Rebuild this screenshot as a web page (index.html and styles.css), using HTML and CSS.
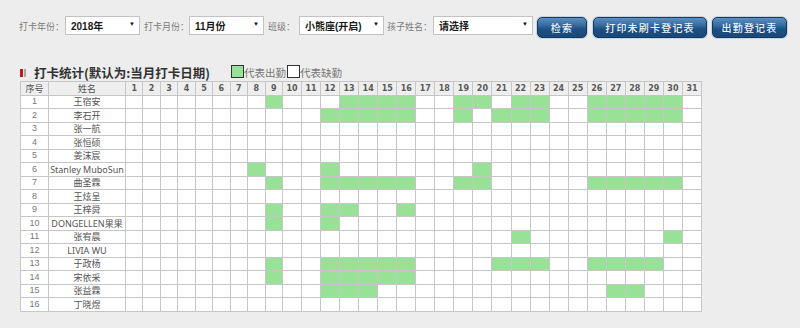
FILE: index.html
```html
<!DOCTYPE html>
<html lang="zh-CN">
<head>
<meta charset="utf-8">
<title>打卡统计</title>
<link rel="stylesheet" href="styles.css">
</head>
<body>
<div class="page">
  <div class="toolbar">
    <span class="lbl lbl-1">打卡年份：</span>
    <div class="sel sel-1"><span>2018年</span><span class="arrow">▼</span></div>
    <span class="lbl lbl-2">打卡月份：</span>
    <div class="sel sel-2"><span>11月份</span><span class="arrow">▼</span></div>
    <span class="lbl lbl-3">班级：</span>
    <div class="sel sel-3"><span>小熊座(开启)</span><span class="arrow">▼</span></div>
    <span class="lbl lbl-4">孩子姓名：</span>
    <div class="sel sel-4"><span>请选择</span><span class="arrow">▼</span></div>
    <button class="btn btn-1">检索</button>
    <button class="btn btn-2">打印未刷卡登记表</button>
    <button class="btn btn-3">出勤登记表</button>
  </div>

  <div class="title-row">
    <span class="mark-red"></span><span class="mark-gray"></span>
    <span class="title">打卡统计(默认为:当月打卡日期)</span>
    <span class="legend-box legend-on"></span><span class="legend-txt">代表出勤</span>
    <span class="legend-box legend-off"></span><span class="legend-txt">代表缺勤</span>
  </div>

  <table class="grid">
    <colgroup>
      <col class="c-no"><col class="c-name">
      <col class="c-s"><col class="c-s"><col class="c-s"><col class="c-s"><col class="c-s"><col class="c-s"><col class="c-s"><col class="c-s"><col class="c-s">
      <col class="c-d"><col class="c-d"><col class="c-d"><col class="c-d"><col class="c-d"><col class="c-d"><col class="c-d"><col class="c-d"><col class="c-d"><col class="c-d"><col class="c-d">
      <col class="c-d"><col class="c-d"><col class="c-d"><col class="c-d"><col class="c-d"><col class="c-d"><col class="c-d"><col class="c-d"><col class="c-d"><col class="c-d"><col class="c-d">
    </colgroup>
    <thead>
      <tr>
        <th class="h-txt">序号</th><th class="h-txt">姓名</th>
        <th>1</th><th>2</th><th>3</th><th>4</th><th>5</th><th>6</th><th>7</th><th>8</th><th>9</th><th>10</th>
        <th>11</th><th>12</th><th>13</th><th>14</th><th>15</th><th>16</th><th>17</th><th>18</th><th>19</th><th>20</th>
        <th>21</th><th>22</th><th>23</th><th>24</th><th>25</th><th>26</th><th>27</th><th>28</th><th>29</th><th>30</th><th>31</th>
      </tr>
    </thead>
    <tbody>
      <tr><td class="no">1</td><td class="nm">王宿安</td>
        <td></td><td></td><td></td><td></td><td></td><td></td><td></td><td></td>
        <td class="g"></td><td></td><td></td><td></td>
        <td class="g"></td><td class="g"></td><td class="g"></td><td class="g"></td>
        <td></td><td></td><td class="g"></td><td class="g"></td><td></td><td class="g"></td><td class="g"></td><td></td><td></td>
        <td class="g"></td><td class="g"></td><td class="g"></td><td class="g"></td><td class="g"></td><td></td></tr>
      <tr><td class="no">2</td><td class="nm">李石开</td>
        <td></td><td></td><td></td><td></td><td></td><td></td><td></td><td></td><td></td><td></td><td></td>
        <td class="g"></td><td class="g"></td><td class="g"></td><td class="g"></td><td class="g"></td>
        <td></td><td></td><td class="g"></td><td></td><td class="g"></td><td class="g"></td><td class="g"></td><td></td><td></td>
        <td class="g"></td><td class="g"></td><td class="g"></td><td class="g"></td><td class="g"></td><td></td></tr>
      <tr><td class="no">3</td><td class="nm">张一航</td>
        <td></td><td></td><td></td><td></td><td></td><td></td><td></td><td></td><td></td><td></td>
        <td></td><td></td><td></td><td></td><td></td><td></td><td></td><td></td><td></td><td></td>
        <td></td><td></td><td></td><td></td><td></td><td></td><td></td><td></td><td></td><td></td><td></td></tr>
      <tr><td class="no">4</td><td class="nm">张恒硕</td>
        <td></td><td></td><td></td><td></td><td></td><td></td><td></td><td></td><td></td><td></td>
        <td></td><td></td><td></td><td></td><td></td><td></td><td></td><td></td><td></td><td></td>
        <td></td><td></td><td></td><td></td><td></td><td></td><td></td><td></td><td></td><td></td><td></td></tr>
      <tr><td class="no">5</td><td class="nm">姜沫宸</td>
        <td></td><td></td><td></td><td></td><td></td><td></td><td></td><td></td><td></td><td></td>
        <td></td><td></td><td></td><td></td><td></td><td></td><td></td><td></td><td></td><td></td>
        <td></td><td></td><td></td><td></td><td></td><td></td><td></td><td></td><td></td><td></td><td></td></tr>
      <tr><td class="no">6</td><td class="nm">Stanley MuboSun</td>
        <td></td><td></td><td></td><td></td><td></td><td></td><td></td><td class="g"></td>
        <td></td><td></td><td></td><td class="g"></td>
        <td></td><td></td><td></td><td></td><td></td><td></td><td></td><td class="g"></td>
        <td></td><td></td><td></td><td></td><td></td><td></td><td></td><td></td><td></td><td></td><td></td></tr>
      <tr><td class="no">7</td><td class="nm">曲圣霖</td>
        <td></td><td></td><td></td><td></td><td></td><td></td><td></td><td></td>
        <td class="g"></td><td></td><td></td>
        <td class="g"></td><td class="g"></td><td class="g"></td><td class="g"></td><td class="g"></td>
        <td></td><td></td><td class="g"></td><td class="g"></td>
        <td></td><td></td><td></td><td></td><td></td>
        <td class="g"></td><td class="g"></td><td class="g"></td><td class="g"></td><td class="g"></td><td></td></tr>
      <tr><td class="no">8</td><td class="nm">王炫呈</td>
        <td></td><td></td><td></td><td></td><td></td><td></td><td></td><td></td><td></td><td></td>
        <td></td><td></td><td></td><td></td><td></td><td></td><td></td><td></td><td></td><td></td>
        <td></td><td></td><td></td><td></td><td></td><td></td><td></td><td></td><td></td><td></td><td></td></tr>
      <tr><td class="no">9</td><td class="nm">王梓舜</td>
        <td></td><td></td><td></td><td></td><td></td><td></td><td></td><td></td>
        <td class="g"></td><td></td><td></td><td class="g"></td><td class="g"></td><td></td><td></td><td class="g"></td>
        <td></td><td></td><td></td><td></td><td></td><td></td><td></td><td></td><td></td><td></td>
        <td></td><td></td><td></td><td></td><td></td></tr>
      <tr><td class="no">10</td><td class="nm">DONGELLEN果果</td>
        <td></td><td></td><td></td><td></td><td></td><td></td><td></td><td></td>
        <td class="g"></td><td></td><td></td><td class="g"></td>
        <td></td><td></td><td></td><td></td><td></td><td></td><td></td><td></td><td></td><td></td>
        <td></td><td></td><td></td><td></td><td></td><td></td><td></td><td></td><td></td></tr>
      <tr><td class="no">11</td><td class="nm">张宥晨</td>
        <td></td><td></td><td></td><td></td><td></td><td></td><td></td><td></td><td></td><td></td>
        <td></td><td></td><td></td><td></td><td></td><td></td><td></td><td></td><td></td><td></td>
        <td></td><td class="g"></td><td></td><td></td><td></td><td></td><td></td><td></td><td></td><td class="g"></td><td></td></tr>
      <tr><td class="no">12</td><td class="nm">LIVIA WU</td>
        <td></td><td></td><td></td><td></td><td></td><td></td><td></td><td></td><td></td><td></td>
        <td></td><td></td><td></td><td></td><td></td><td></td><td></td><td></td><td></td><td></td>
        <td></td><td></td><td></td><td></td><td></td><td></td><td></td><td></td><td></td><td></td><td></td></tr>
      <tr><td class="no">13</td><td class="nm">于政杨</td>
        <td></td><td></td><td></td><td></td><td></td><td></td><td></td><td></td>
        <td class="g"></td><td></td><td></td>
        <td class="g"></td><td class="g"></td><td class="g"></td><td class="g"></td><td class="g"></td>
        <td></td><td></td><td></td><td></td>
        <td class="g"></td><td class="g"></td><td class="g"></td><td></td><td></td>
        <td class="g"></td><td class="g"></td><td class="g"></td><td class="g"></td><td></td><td></td></tr>
      <tr><td class="no">14</td><td class="nm">宋依采</td>
        <td></td><td></td><td></td><td></td><td></td><td></td><td></td><td></td>
        <td class="g"></td><td></td><td></td>
        <td class="g"></td><td class="g"></td><td class="g"></td><td class="g"></td><td class="g"></td>
        <td></td><td></td><td></td><td></td><td></td><td></td><td></td><td></td><td></td><td></td>
        <td></td><td></td><td></td><td></td><td></td></tr>
      <tr><td class="no">15</td><td class="nm">张益霖</td>
        <td></td><td></td><td></td><td></td><td></td><td></td><td></td><td></td><td></td><td></td><td></td>
        <td class="g"></td><td class="g"></td><td class="g"></td>
        <td></td><td></td><td></td><td></td><td></td><td></td><td></td><td></td><td></td><td></td><td></td><td></td>
        <td class="g"></td><td class="g"></td><td></td><td></td><td></td></tr>
      <tr><td class="no">16</td><td class="nm">丁晓煜</td>
        <td></td><td></td><td></td><td></td><td></td><td></td><td></td><td></td><td></td><td></td>
        <td></td><td></td><td></td><td></td><td></td><td></td><td></td><td></td><td></td><td></td>
        <td></td><td></td><td></td><td></td><td></td><td></td><td></td><td></td><td></td><td></td><td></td></tr>
    </tbody>
  </table>
</div>
</body>
</html>
```

FILE: styles.css
```css
html, body {
  margin: 0;
  padding: 0;
}
body {
  background: #ededed;
  font-family: "Noto Sans", "Noto Sans CJK SC", sans-serif;
  color: #555;
}
.page {
  padding: 15px 0 0 19px;
}

/* toolbar */
.toolbar {
  display: flex;
  align-items: center;
  height: 22px;
}
.lbl {
  font-size: 9px;
  color: #7a7a7a;
  white-space: nowrap;
  font-family: "Noto Sans CJK SC", sans-serif;
}
.lbl-1 { width: 46px; }
.lbl-2 { width: 45px; padding-left: 4px; }
.lbl-3 { width: 31px; padding-left: 4px; }
.lbl-4 { width: 46px; padding-left: 3px; }
.sel {
  box-sizing: border-box;
  height: 19px;
  margin-top: -2px;
  background: #fff;
  border: 1px solid #c2c2c2;
  display: flex;
  align-items: center;
  justify-content: space-between;
  padding: 0 4px 0 5px;
  font-family: "Liberation Sans", "Noto Sans CJK SC", sans-serif;
  font-size: 10px;
  font-weight: bold;
  color: #1a1a1a;
}
.sel-1, .sel-2 { width: 75px; }
.sel-3 { width: 85px; }
.sel-4 { width: 100px; }
.arrow {
  font-size: 6px;
  color: #111;
  margin-top: -3px;
}
.btn {
  box-sizing: border-box;
  height: 21px;
  margin-top: 2px;
  padding: 0;
  border: 1px solid #123a62;
  border-radius: 5px;
  background: linear-gradient(to bottom, #5d8fbf 0%, #346a9e 40%, #1d4f82 60%, #1b4878 100%);
  box-shadow: 0 0 0 1px #c9d3dd;
  color: #eef3f9;
  font-family: "Noto Sans CJK SC", sans-serif;
  font-size: 10px;
  font-weight: 500;
  letter-spacing: 1.2px;
  text-align: center;
}
.btn-1 { width: 50px; margin-left: 4px; }
.btn-2 { width: 114px; margin-left: 6px; }
.btn-3 { width: 75px; margin-left: 5px; }

/* title */
.title-row {
  display: flex;
  align-items: center;
  height: 17px;
  margin-top: 27px;
  padding-left: 1px;
}
.mark-red {
  width: 3px;
  height: 8px;
  background: #c4161c;
}
.mark-gray {
  width: 2px;
  height: 8px;
  margin-left: 1px;
  background: #a9a9a9;
}
.title {
  margin-left: 8px;
  font-family: "Noto Sans CJK SC", sans-serif;
  font-size: 12.5px;
  font-weight: bold;
  color: #333;
  white-space: nowrap;
}
.legend-box {
  box-sizing: border-box;
  width: 13px;
  height: 13px;
  border: 1px solid #333;
  margin-top: -3px;
}
.legend-on {
  background: #98e298;
  margin-left: 21px;
}
.legend-off {
  background: #fff;
  margin-left: 1px;
}
.legend-txt {
  font-family: "Noto Sans CJK SC", sans-serif;
  font-size: 10.5px;
  color: #777;
  white-space: nowrap;
}

/* grid */
.grid {
  border-collapse: collapse;
  table-layout: fixed;
  width: 681px;
  margin-left: 1px;
  background: #fff;
}
.c-no { width: 28px; }
.c-name { width: 77px; }
.c-s { width: 17.44px; }
.c-d { width: 19.05px; }
.grid tr {
  height: 13.5px;
}
.grid th, .grid td {
  border: 1px solid #c6c6c6;
  padding: 0;
  text-align: center;
  line-height: 11px;
  white-space: nowrap;
  overflow: hidden;
}
.grid th {
  background: #eeeeee;
  font-family: "DejaVu Sans", sans-serif;
  font-size: 8px;
  font-weight: bold;
  color: #5a5a5a;
}
.grid th.h-txt {
  font-family: "Noto Sans CJK SC", sans-serif;
  font-size: 9px;
  font-weight: normal;
  color: #555;
}
.grid td.no {
  font-family: "Liberation Sans", sans-serif;
  font-size: 9px;
  color: #777;
}
.grid td.nm {
  font-family: "Noto Sans", "Noto Sans CJK SC", sans-serif;
  font-size: 9px;
  color: #555;
}
.grid td.g {
  background: #98e298;
}
```
